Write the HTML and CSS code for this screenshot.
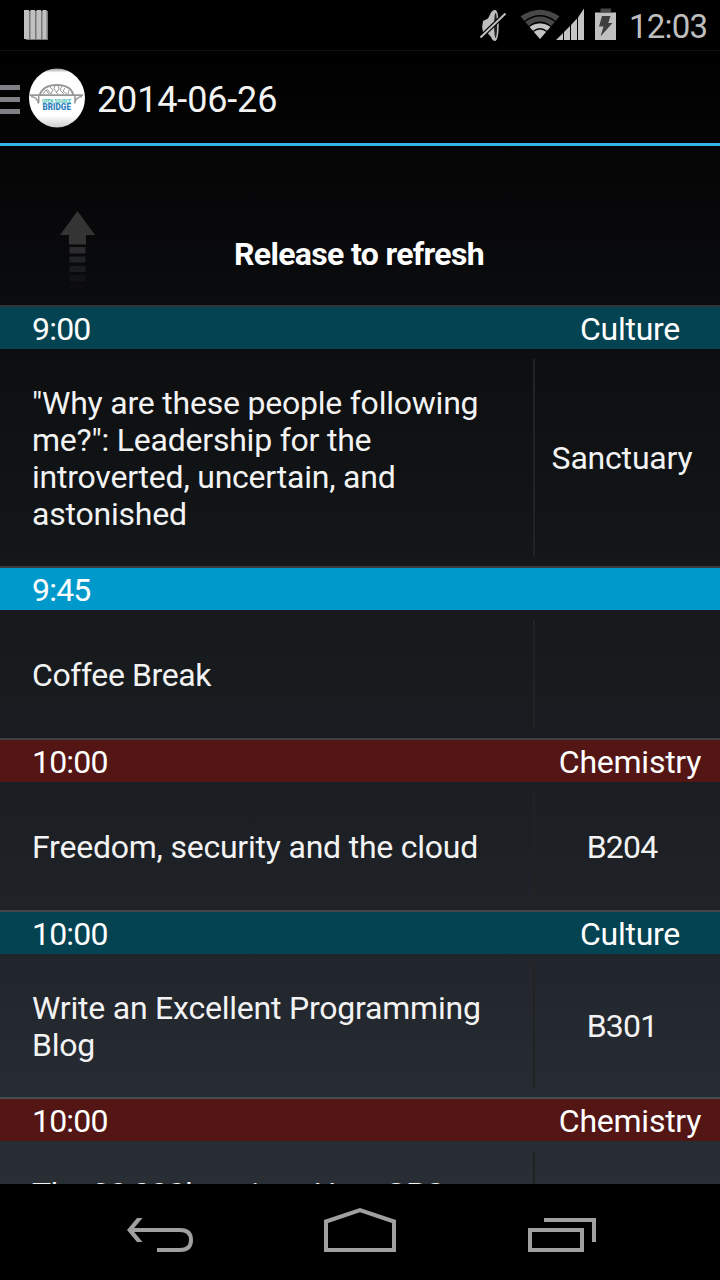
FILE: index.html
```html
<!DOCTYPE html>
<html lang="en">
<head>
<meta charset="utf-8">
<title>2014-06-26</title>
<link rel="stylesheet" href="styles.css">
</head>
<body>
<div class="screen">
  <div class="statusbar">
    <svg class="notif" width="24" height="30" viewBox="0 0 24 30">
      <path fill="#777" d="M0 1h24v29H2z"/>
      <path fill="#c0c0c0" d="M0 0h5v29H0zM6.500 0h4.500v29H6.500zM12.500 0h4.500v29h-4.500zM18.500 0h4v29h-4z"/>
    </svg>
    <svg class="status-icons" width="140" height="34" viewBox="478 8 140 34">
      <path fill="#bebebe" d="M483 21l5-2.500 3-6c1.500-2 3-2.500 4.500-2.500 2.200 1 3.200 7 3.200 15.500S497.500 41 495 41c-1.500 0-3-1.500-4-4l-3-3.500-5-1.500q-1.500-5.500 0-11z"/>
      <ellipse cx="495.600" cy="25.500" rx="1.500" ry="12.500" fill="#222"/>
      <path d="M479.500 38.500l27-26" stroke="#000" stroke-width="4.500"/>
      <path d="M480.500 37.500l25-24" stroke="#c0c0c0" stroke-width="2"/>
      <path fill="#484848" d="M540 39l-19.500-22.500Q540 3 559.500 16.500z"/>
      <path fill="#c4c4c4" d="M540 39l-10.700-12.500Q540 20.500 550.700 26.500z"/>
      <path fill="none" stroke="#000" stroke-width="1.300" d="M524.500 21.500Q540 10 555.500 21.500M529 26.500Q540 18 551 26.500M533 31.500Q540 26 547 31.500"/>
      <path fill="#c4c4c4" d="M556 40l7-7v7zM564 32l6-6v14h-6zM571 25l6-6.500V40h-6zM578 17.500l6-9V40h-6z"/>
      <path fill="#484848" d="M600.500 8.500h10.500V12h-10.500z"/>
      <path fill="#c0c0c0" d="M595 12.500h21V40h-21z"/>
      <path fill="#3e3e3e" d="M602 16h8.500l-2.200 7h4.200l-12 13.500 3-10h-4.500z"/>
    </svg>
    <span class="clock">12:03</span>
  </div>
  <div class="actionbar">
    <div class="drawer"><i></i><i></i><i></i></div>
    <svg class="logo" width="58" height="60" viewBox="28 68 58 60">
      <defs><linearGradient id="disc" x1="0" y1="0" x2="0" y2="1">
        <stop offset="0" stop-color="#999"/><stop offset=".07" stop-color="#fff"/><stop offset=".8" stop-color="#fff"/><stop offset="1" stop-color="#ccc"/>
      </linearGradient></defs>
      <ellipse cx="57" cy="98" rx="28" ry="29.500" fill="url(#disc)"/>
      <g fill="none" stroke="#959799">
        <path stroke-width="1.800" d="M30 95.200h53M39.500 95Q43 85 57 84.800 71 85 73.500 95"/>
        <path stroke-width="1.500" d="M31 96.500q6 .5 7.500 7M82 96.500q-6 .5-7.500 7M38.700 96v7M75 96v7"/>
        <path stroke-width="1" d="M43 94l3-4 3 4M47 89l4 5M50 87l3 3-2 4M55 85l-1 4 4 5M58 85l1 4-3 4M62 86l-2 4 4 4M65 88l-2 3 4 3M69 90l-1 4"/>
      </g>
      <text class="logo-top" x="42" y="103" textLength="29" lengthAdjust="spacingAndGlyphs">OPEN SOURCE</text>
      <text class="logo-name" x="42.500" y="110.300" textLength="28.500" lengthAdjust="spacingAndGlyphs">BRIDGE</text>
    </svg>
    <h1 class="title">2014-06-26</h1>
  </div>
  <div class="refresh">
    <svg class="arrow" width="36" height="82" viewBox="60 210 36 82">
      <path fill="#343434" d="M77.500 211L95 235h-9v9.500H69V235h-9z"/>
      <path fill="#2c2c2e" d="M69.500 247h16v6.500h-16z"/>
      <path fill="#222324" d="M69.500 256.500h16v6h-16z"/>
      <path fill="#1a1b1c" d="M69.500 266h16v6h-16z"/>
      <path fill="#121315" d="M69.500 275h16v6.500h-16z"/>
      <path fill="#0c0d0f" d="M69.500 284.500h16v5h-16z"/>
    </svg>
    <span class="refresh-label">Release to refresh</span>
  </div>
  <div class="list">
    <div class="session culture">
      <div class="head"><span class="time">9:00</span><span class="track">Culture</span></div>
      <div class="body"><p>"Why are these people following<br>me?": Leadership for the<br>introverted, uncertain, and<br>astonished</p><span class="room">Sanctuary</span></div>
    </div>
    <div class="session break">
      <div class="head"><span class="time">9:45</span><span class="track"></span></div>
      <div class="body"><p>Coffee Break</p><span class="room"></span></div>
    </div>
    <div class="session chemistry">
      <div class="head"><span class="time">10:00</span><span class="track">Chemistry</span></div>
      <div class="body"><p>Freedom, security and the cloud</p><span class="room code">B204</span></div>
    </div>
    <div class="session culture">
      <div class="head"><span class="time">10:00</span><span class="track">Culture</span></div>
      <div class="body"><p>Write an Excellent Programming<br>Blog</p><span class="room code">B301</span></div>
    </div>
    <div class="session chemistry last">
      <div class="head"><span class="time">10:00</span><span class="track">Chemistry</span></div>
      <div class="body"><p>The 20,000km view: How GPS<br>&nbsp;</p><span class="room"></span></div>
    </div>
  </div>
  <div class="navbar">
    <svg width="720" height="96" viewBox="0 1184 720 96" fill="none" stroke="#a0a0a0" stroke-width="4">
      <path d="M130 1230h50q11 0 11 10t-11 10h-23"/>
      <path fill="#a0a0a0" stroke="none" d="M127 1230l10-12h5.500l-10 12 10 12H137z"/>
      <path d="M326 1250v-28.500l34-11.500 34 11.500V1250z"/>
      <path d="M530 1230h52v20h-52zM544 1220h50v22"/>
    </svg>
  </div>
</div>
</body>
</html>
```
FILE: styles.css
```css
body {
  margin: 0;
  background: #000;
}
.screen {
  width: 720px;
  height: 1280px;
  display: flex;
  flex-direction: column;
  overflow: hidden;
  font-family: Roboto, sans-serif;
  font-size: 32px;
  line-height: 37px;
  color: #f3f3f3;
  background: linear-gradient(#000 50px, #0b0c0e 305px, #15191b 610px, #1d2126 850px, #272b33 1100px, #292e34 1184px);
}
.statusbar {
  height: 50px;
  flex: none;
  display: flex;
  align-items: flex-start;
  background: #000;
}
.notif {
  margin: 10px 0 0 24px;
}
.status-icons {
  margin: 8px 0 0 430px;
}
.clock {
  margin: 8px 0 0 11px;
  font-size: 33px;
  letter-spacing: -0.8px;
  color: #bebebe;
  white-space: nowrap;
}
.actionbar {
  height: 96px;
  flex: none;
  box-sizing: border-box;
  border-top: 1px solid #121212;
  border-bottom: 3px solid #33b5e5;
  display: flex;
  align-items: center;
}
.drawer {
  width: 20px;
  display: flex;
  flex-direction: column;
  gap: 7px;
  padding-top: 4px;
}
.drawer i {
  height: 5px;
  background: #808186;
}
.logo {
  margin-left: 8px;
  padding-top: 1px;
}
.logo-top {
  font: 700 5px Roboto, sans-serif;
  fill: #35c0b0;
}
.logo-name {
  font: 900 9px Roboto, sans-serif;
  fill: #2f7fc0;
}
.title {
  margin: 6px 0 0 11px;
  font-size: 36px;
  font-weight: 400;
  letter-spacing: -0.15px;
}
.refresh {
  height: 159px;
  flex: none;
  display: flex;
  align-items: flex-start;
}
.arrow {
  margin: 64px 0 0 60px;
}
.refresh-label {
  margin: 90px 0 0 138px;
  font-weight: 700;
  letter-spacing: -0.67px;
  color: #fff;
  white-space: nowrap;
}
.list {
  flex: 1;
  min-height: 0;
  overflow: hidden;
}
.head {
  height: 42px;
  border-top: 2px solid rgba(255, 255, 255, .16);
  background-clip: padding-box;
  display: flex;
  align-items: center;
  justify-content: space-between;
  padding-left: 32px;
  color: #fff;
}
.head span {
  padding-top: 2px;
}
.time {
  letter-spacing: -0.8px;
}
.track {
  width: 180px;
  text-align: center;
  letter-spacing: -0.25px;
}
.culture .head {
  background-color: #044352;
}
.break .head {
  background-color: #0099cc;
}
.chemistry .head {
  background-color: #541515;
}
.body {
  min-height: 128px;
  box-sizing: border-box;
  display: flex;
  padding: 10px 11px 10px 32px;
}
.body p {
  width: 501px;
  margin: 0;
  padding: 26px 0 23px;
  align-self: center;
  letter-spacing: -0.22px;
  white-space: nowrap;
}
.break .body p {
  letter-spacing: -0.4px;
}
.last .body p {
  padding: 25px 0 24px;
  letter-spacing: -0.45px;
}
.room {
  flex: 1;
  display: flex;
  align-items: center;
  justify-content: center;
  padding-top: 2px;
  letter-spacing: -0.2px;
  border-left: 2px solid #222222;
}
.code {
  letter-spacing: -0.8px;
}
.navbar {
  height: 96px;
  flex: none;
  background: #000;
}
```
